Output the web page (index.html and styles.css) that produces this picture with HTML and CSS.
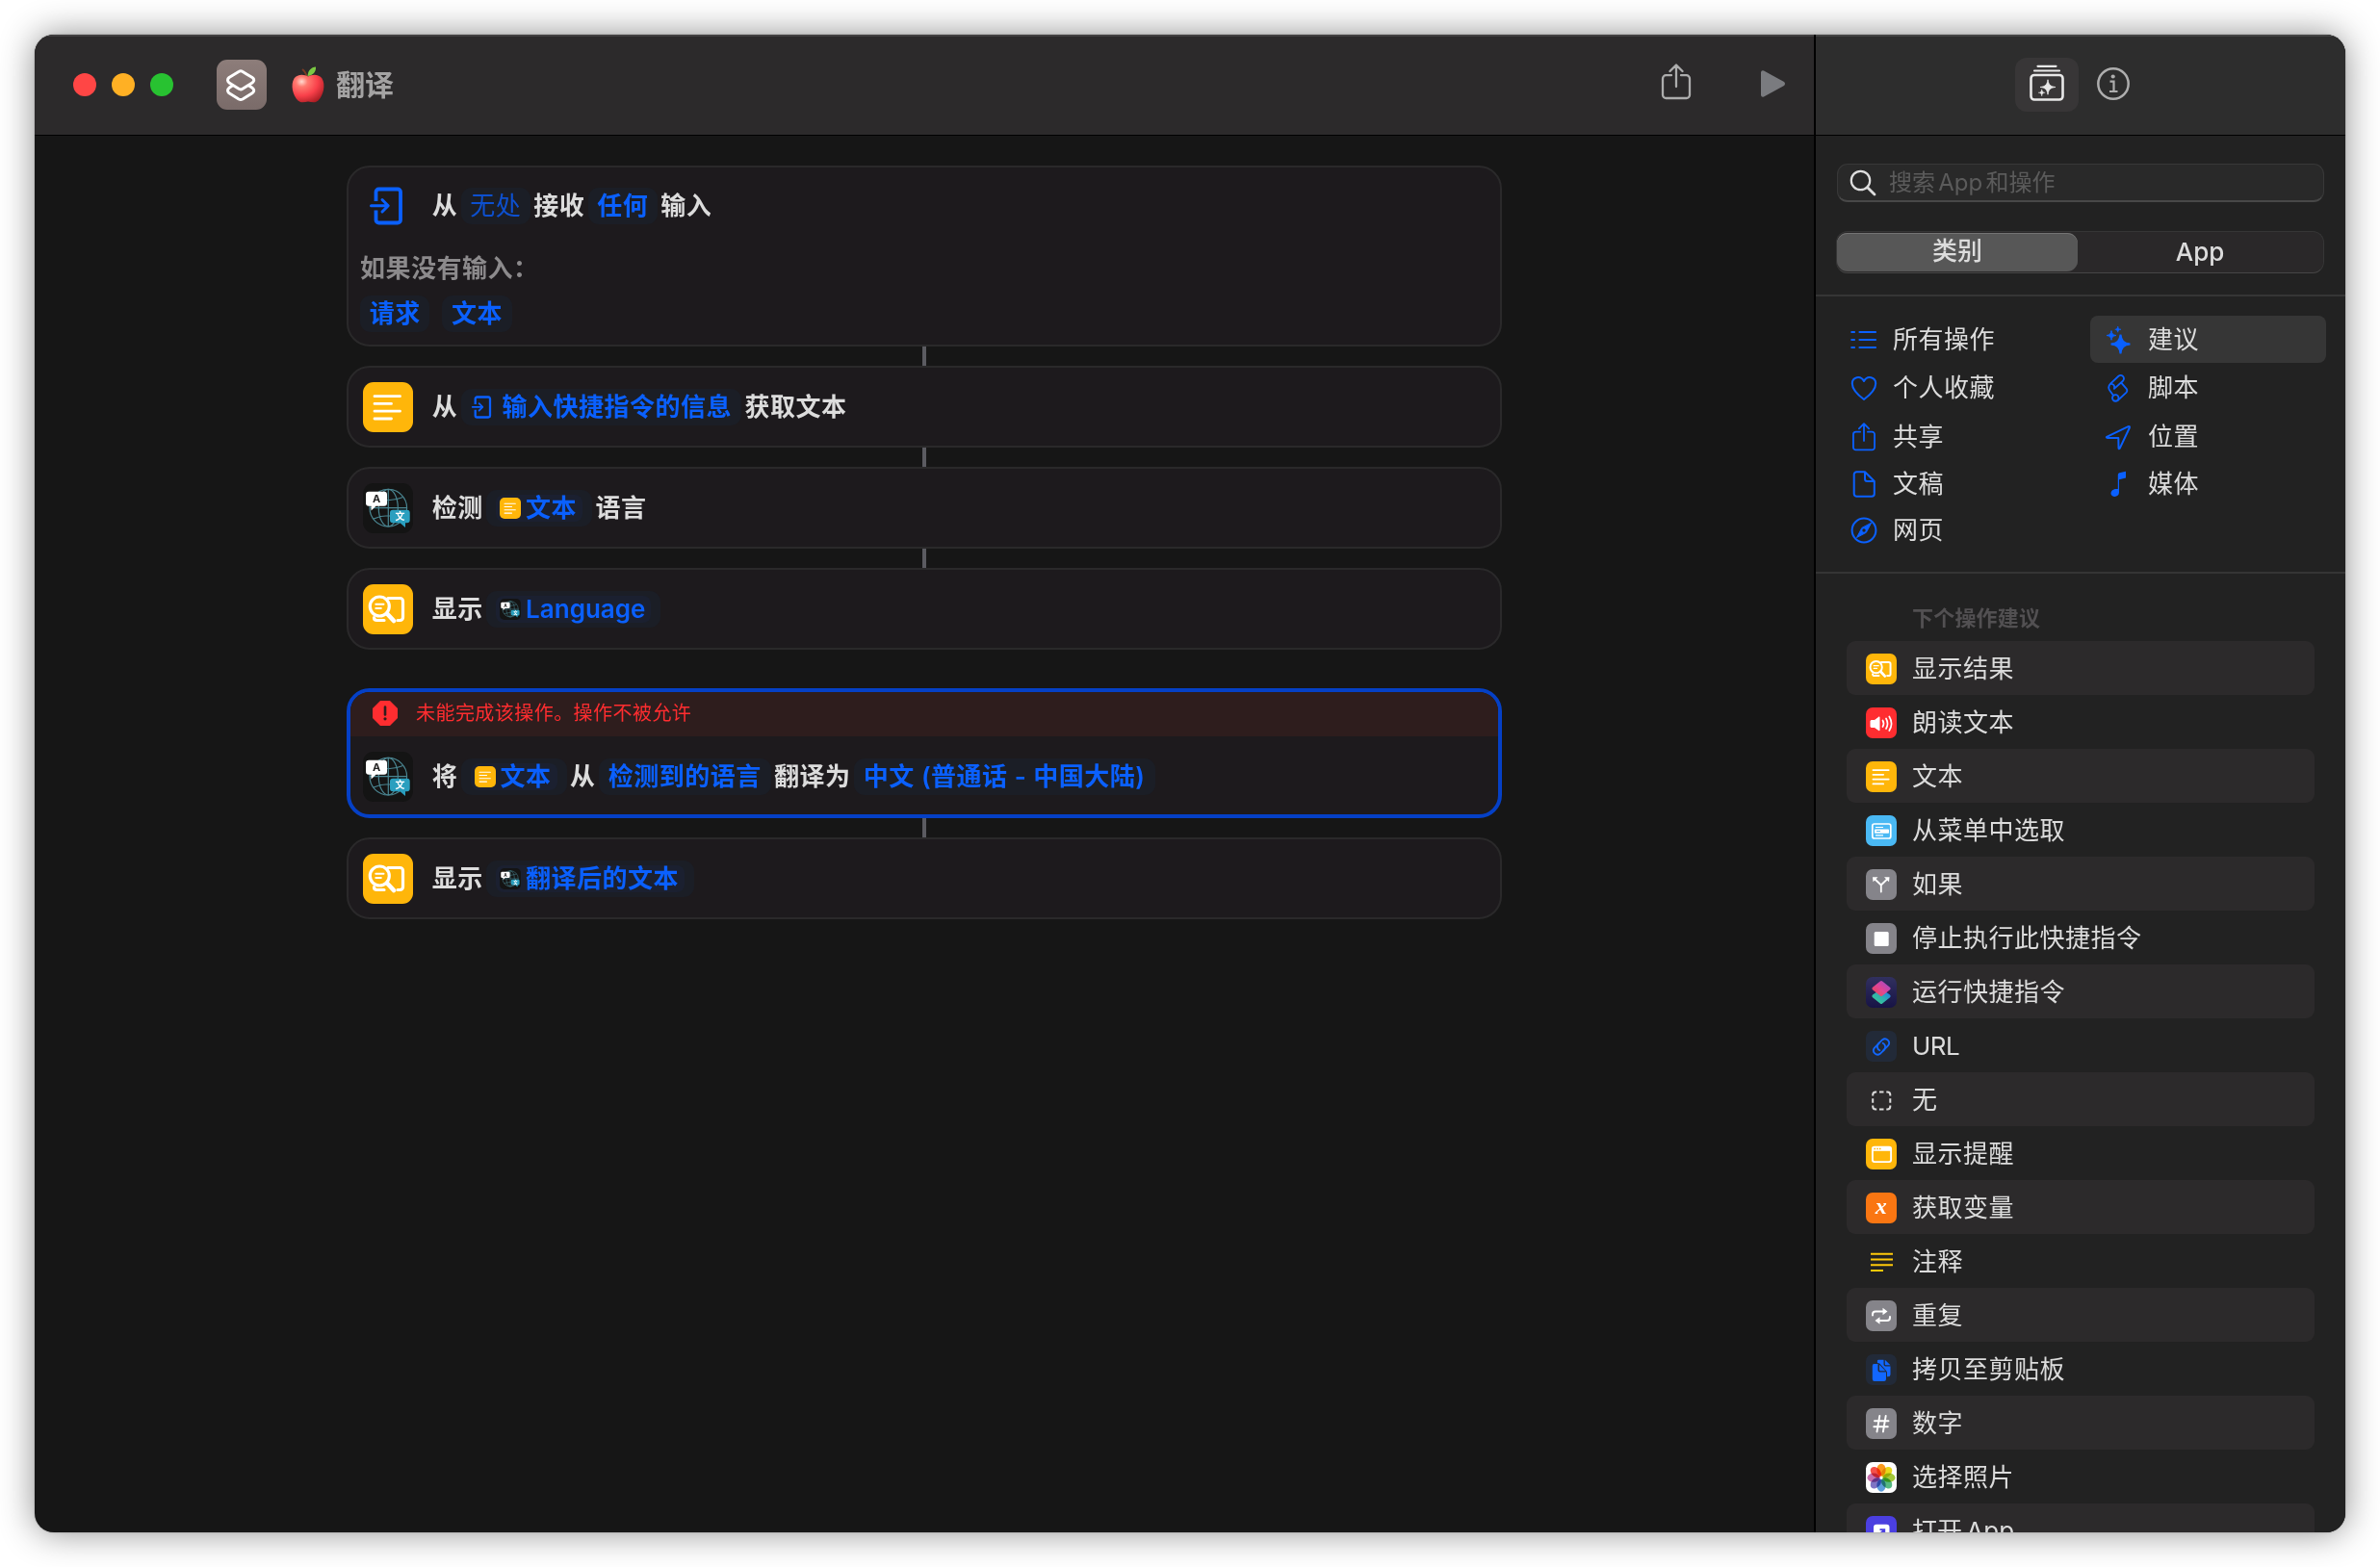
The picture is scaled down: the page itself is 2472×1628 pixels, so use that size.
FILE: index.html
```html
<!DOCTYPE html>
<html lang="zh-CN">
<head>
<meta charset="utf-8">
<title>翻译</title>
<link rel="stylesheet" href="styles.css">
</head>
<body>
<svg class="paints" width="0" height="0">
  <defs>
    <linearGradient id="g-top" x1="0" y1="1" x2="1" y2="0"><stop offset="0" stop-color="#f5493f"/><stop offset=".5" stop-color="#e8459a"/><stop offset="1" stop-color="#9a4fd8"/></linearGradient>
    <linearGradient id="g-bottom" x1="0" y1="1" x2="1" y2="0"><stop offset="0" stop-color="#3fd08a"/><stop offset=".5" stop-color="#2fb0b0"/><stop offset="1" stop-color="#1c6cf5"/></linearGradient>
    <radialGradient id="g-apple" cx=".3" cy=".25" r=".85"><stop offset="0" stop-color="#ffd9cf"/><stop offset=".22" stop-color="#ff7a70"/><stop offset=".6" stop-color="#f9404a"/><stop offset="1" stop-color="#a81c22"/></radialGradient>
  </defs>
</svg>
<svg class="symbols">
  <symbol id="i-text" viewBox="0 0 52 52"><path d="M12 14.7H38.5M12 22.4H29.5M12 30.2H38.5M12 38H29.5" fill="none" stroke="#fff" stroke-width="2.8" stroke-linecap="round"/></symbol>
  <symbol id="i-translate" viewBox="0 0 52 52">
    <g fill="none" stroke="#4a8591" stroke-width="1.2"><circle cx="26.3" cy="25.7" r="19.3"/><ellipse cx="26.3" cy="25.7" rx="10" ry="19.3"/><path d="M26.3 6.4V45M7 25.7H45.6M11 14.5Q26 21 41.6 14.5M11 37Q26 30.500 41.600 37"/></g>
    <path d="M6 8.700H22a3 3 0 0 1 3 3V20.700a3 3 0 0 1-3 3H13.500L8.500 28.500V23.700H6a3 3 0 0 1-3-3V11.700a3 3 0 0 1 3-3Z" fill="#fff"/>
    <path d="M31 27.700H45.700a3 3 0 0 1 3 3V38.300a3 3 0 0 1-3 3H44V46L38.500 41.300H31a3 3 0 0 1-3-3V30.700a3 3 0 0 1 3-3Z" fill="#2a9fbf"/>
    <text x="14" y="20.300" class="glyph-a">A</text><text x="38.400" y="38.200" class="glyph-wen">文</text>
  </symbol>
  <symbol id="i-result" viewBox="0 0 52 52"><g fill="none" stroke="#fff" stroke-linecap="round" stroke-linejoin="round"><path d="M26 14.500H38.500a3 3 0 0 1 3 3V34.500a3 3 0 0 1-3 3H36M11.500 34.500C11.500 36.500 12.500 37.500 14.500 37.500H22" stroke-width="3.200"/><circle cx="17.300" cy="23" r="10" stroke-width="3.200"/><path d="M25 30.500L32 38" stroke-width="4.600"/><path d="M13.300 20.700H21.500M13.300 24.900H18.800" stroke-width="2"/></g></symbol>
  <symbol id="i-enter" viewBox="0 0 36 40"><g fill="none" stroke="currentColor" stroke-linecap="round" stroke-linejoin="round" stroke-width="3.800"><path d="M7.500 15V5.500a3 3 0 0 1 3-3H30a3 3 0 0 1 3 3V34.500a3 3 0 0 1-3 3H10.500a3 3 0 0 1-3-3V24.500" stroke-linecap="butt"/><path d="M2.500 19.700H19M14 13.500L20.200 19.700L14 26" stroke-width="3"/></g></symbol>
  <symbol id="i-share" viewBox="0 0 32 38"><path d="M11 12.200H5.500a3.500 3.500 0 0 0-3.500 3.500V32.500a3.500 3.500 0 0 0 3.500 3.500H26.500a3.500 3.500 0 0 0 3.500-3.500V15.700a3.500 3.500 0 0 0-3.500-3.500H21M16 24V2.500M9.500 8L16 1.500L22.500 8" fill="none" stroke="currentColor" stroke-width="2.300" stroke-linecap="round" stroke-linejoin="round"/></symbol>
  <symbol id="i-star4" viewBox="0 0 20 20"><path d="M10 0C10.700 6.500 13 9.300 20 10C13 10.700 10.700 13.500 10 20C9.300 13.500 7 10.700 0 10C7 9.300 9.300 6.500 10 0Z" fill="currentColor"/></symbol>
</svg>

<div class="window">
  <main class="editor">
    <header class="titlebar">
      <div class="lights"><i class="light red"></i><i class="light amber"></i><i class="light green"></i></div>
      <div class="app-icon"><svg width="52" height="52" viewBox="0 0 52 52" fill="none" stroke="#fff" stroke-width="3" stroke-linejoin="round"><path d="M23.300 12.300Q25 11.200 26.700 12.300L37 18.500Q40.500 21 37 24L27 30.300Q25 31.500 23 30.300L13 24Q10 21 13 18.500Z"/><path d="M17 26.500L13 29.300Q10 32 13 34.800L23 41Q25 42 27 41L37 34.800Q40.500 32 37 29.300L33 26.500"/></svg></div>
      <svg class="apple" width="38" height="40" viewBox="0 0 38 40"><path d="M18 12Q16 6 13 4" stroke="#7a3b24" stroke-width="2" fill="none"/><path d="M18.500 11C19 5 22 2 27 1.500C27.500 6.500 24 10.500 18.500 11Z" fill="#7bc843"/><path d="M19 11.500C23 9 30 8.500 33.500 13.500C37.500 20 35 31 29.500 36.500C26 39.500 22.500 38 19 37.500C15.500 38 12 39.500 8.500 36.500C3 31 .5 20 4.500 13.500C8 8.500 15 9 19 11.500Z" fill="url(#g-apple)"/></svg>
      <h1>翻译</h1>
      <svg class="share" width="32" height="38"><use href="#i-share"/></svg>
      <svg class="play" width="28" height="30" viewBox="0 0 28 30"><path d="M1 3V27Q1.500 29.500 4 28.500L25 17Q27 15 25 13L4 1.500Q1.500 .5 1 3Z" fill="#7a7b7f"/></svg>
    </header>

    <div class="flow">
      <section class="card card-input">
        <div class="line">
          <span class="bare"><svg width="36" height="40"><use href="#i-enter"/></svg></span>
          <span>从</span><span class="chip dim">无处</span><span>接收</span><span class="chip">任何</span><span>输入</span>
        </div>
        <p class="hint">如果没有输入：</p>
        <div class="options"><span class="chip">请求</span><span class="chip">文本</span></div>
      </section>
      <div class="link"></div>
      <section class="card">
        <div class="line">
          <span class="tile yellow"><svg><use href="#i-text"/></svg></span>
          <span>从</span><span class="chip"><svg class="enter-small" width="22" height="24"><use href="#i-enter"/></svg>输入快捷指令的信息</span><span>获取文本</span>
        </div>
      </section>
      <div class="link"></div>
      <section class="card">
        <div class="line">
          <span class="tile black"><svg><use href="#i-translate"/></svg></span>
          <span>检测</span><span class="chip"><span class="token"><span class="mini yellow"><svg><use href="#i-text"/></svg></span>文本</span></span><span>语言</span>
        </div>
      </section>
      <div class="link"></div>
      <section class="card">
        <div class="line">
          <span class="tile yellow"><svg><use href="#i-result"/></svg></span>
          <span>显示</span><span class="chip"><span class="token"><span class="mini black"><svg><use href="#i-translate"/></svg></span><b class="latin">Language</b></span></span>
        </div>
      </section>
      <section class="card selected">
        <div class="error"><svg width="26" height="26" viewBox="0 0 26 26"><path d="M8 0H18L26 8V18L18 26H8L0 18V8Z" fill="#ff2d30"/><path d="M13 6.500V14.500" stroke="#2e1d1d" stroke-width="2.600" stroke-linecap="round"/><circle cx="13" cy="18.800" r="1.600" fill="#2e1d1d"/></svg>未能完成该操作。操作不被允许</div>
        <div class="line">
          <span class="tile black"><svg><use href="#i-translate"/></svg></span>
          <span>将</span><span class="chip"><span class="token"><span class="mini yellow"><svg><use href="#i-text"/></svg></span>文本</span></span><span>从</span><span class="chip">检测到的语言</span><span>翻译为</span><span class="chip">中文 (普通话 - 中国大陆)</span>
        </div>
      </section>
      <div class="link"></div>
      <section class="card">
        <div class="line">
          <span class="tile yellow"><svg><use href="#i-result"/></svg></span>
          <span>显示</span><span class="chip"><span class="token"><span class="mini black"><svg><use href="#i-translate"/></svg></span>翻译后的文本</span></span>
        </div>
      </section>
    </div>
  </main>

  <aside class="sidebar">
    <header class="sidebar-bar">
      <div class="tab-on"><svg width="36" height="38" viewBox="0 0 36 38" fill="none" stroke="#e8e8e8"><rect x="1.500" y="11" width="33" height="25.500" rx="3.500" stroke-width="2.600"/><path d="M5 6.500H31M8.500 1.800H27.500" stroke-width="2.200" stroke-linecap="round"/><use href="#i-star4" x="11" y="15.500" width="16" height="16" color="#e8e8e8"/><use href="#i-star4" x="9" y="25.500" width="7.500" height="7.500" color="#e8e8e8"/></svg></div>
      <svg class="info" width="34" height="34" viewBox="0 0 34 34" fill="none" stroke="#adadad"><circle cx="17" cy="17" r="15.700" stroke-width="2.500"/><circle cx="16.700" cy="9.500" r="2.100" fill="#adadad" stroke="none"/><path d="M13.500 14.700H17.500V25M13 25H21.500" stroke-width="2.200"/></svg>
    </header>
    <div class="search"><svg width="28" height="28" viewBox="0 0 28 28" fill="none" stroke="#dedede" stroke-linecap="round"><circle cx="11.500" cy="11.500" r="9.700" stroke-width="2.200"/><path d="M18.700 18.700L26 26" stroke-width="2.800"/></svg><span>搜索 App 和操作</span></div>
    <div class="segment"><span class="on">类别</span><span>App</span></div>
    <div class="categories">
      <div class="cat"><svg viewBox="0 0 28 28"><path d="M1.300 6H4M1.300 14H4M1.300 22H4M9.500 6H26M9.500 14H26M9.500 22H26" stroke-width="2.200"/></svg>所有操作</div>
      <div class="cat on"><svg viewBox="0 0 28 28"><use href="#i-star4" x="6.500" y="8.500" width="20" height="20"/><use href="#i-star4" x="2" y="4.500" width="10" height="10"/><use href="#i-star4" x="10.500" y="0" width="6.500" height="6.500"/></svg>建议</div>
      <div class="cat"><svg viewBox="0 0 28 28"><path d="M14 26C6 20 1.800 14.500 1.800 9.500C1.800 2.500 10.500 .5 14 7C17.500 .5 26.200 2.500 26.200 9.500C26.200 14.500 22 20 14 26Z"/></svg>个人收藏</div>
      <div class="cat"><svg viewBox="0 0 28 33"><path d="M9.500 17.500L19.500 8.500C22.500 4.500 18 .3 14.500 3L5.500 11.500C2.500 14.500 3 17.500 4.500 19.500L8.500 25M5.500 12C8.500 11.500 10.500 14 9.500 17.500M17.500 10.500L23.500 17.500Q25 19.500 23.500 21.500L13.500 31"/><circle cx="11" cy="28" r="3.600"/></svg>脚本</div>
      <div class="cat"><svg viewBox="0 0 32 38" class="thick"><use href="#i-share"/></svg>共享</div>
      <div class="cat"><svg viewBox="0 0 28 28"><path d="M2.200 13.800L24.500 3.200Q26.500 2.600 25.800 4.500L15.800 25.600Q14.800 27 14.500 25.500L14.300 14.900L3 15Q1.200 14.700 2.200 13.800Z"/></svg>位置</div>
      <div class="cat"><svg viewBox="0 0 28 28"><path d="M6.500 1.200H15L24.800 11V24a2.800 2.800 0 0 1-2.800 2.800H6.500a2.800 2.800 0 0 1-2.800-2.800V4a2.800 2.800 0 0 1 2.800-2.800ZM15 1.200V8.500Q15 11 17.500 11H24.800"/></svg>文稿</div>
      <div class="cat"><svg viewBox="0 0 28 28"><path d="M13.800 4.200Q13.800 2.700 15.300 2.200L22 .8V7.500L15 9.200V22.500C15 28.500 6 28 6.500 23C7 19.500 11 18.500 13.800 19Z" fill="currentColor" stroke="none"/></svg>媒体</div>
      <div class="cat"><svg viewBox="0 0 28 28"><circle cx="14" cy="14" r="12.400"/><path d="M21.500 6.500L16.300 16.300L6.500 21.500L11.700 11.700Z" fill="currentColor" stroke-width="1"/><circle cx="14" cy="14" r="1.700" fill="#222" stroke="none"/></svg>网页</div>
    </div>
    <div class="suggestions">
      <h2>下个操作建议</h2>
      <div class="row"><span class="ico yellow"><svg><use href="#i-result"/></svg></span>显示结果</div>
      <div class="row"><span class="ico red"><svg viewBox="0 0 32 32"><path d="M5.500 13.500H9L14 9.800V24L9 20.500H5.500Q5 20.500 5 20V14Q5 13.500 5.500 13.500Z" fill="#fff" stroke="#fff" stroke-linejoin="round"/><path d="M17.500 13.500Q19.500 16.800 17.500 20M21 11.500Q24 16.800 21 22M24.300 9.500Q28.800 16.800 24.300 24" fill="none" stroke="#fff" stroke-width="1.700" stroke-linecap="round"/></svg></span>朗读文本</div>
      <div class="row"><span class="ico yellow"><svg><use href="#i-text"/></svg></span>文本</div>
      <div class="row"><span class="ico sky"><svg viewBox="0 0 32 32"><rect x="6.800" y="9" width="19" height="15" rx="2" fill="none" stroke="#fff" stroke-width="1.700"/><path d="M10 12.500H18M10 20.800H18" stroke="#fff" stroke-width="1.200"/><rect x="9" y="14.400" width="15" height="4.400" rx=".8" fill="#fff"/><path d="M11 16.600H15" stroke="#4ab9f4" stroke-width="1"/></svg></span>从菜单中选取</div>
      <div class="row"><span class="ico gray"><svg viewBox="0 0 32 32"><path d="M15.800 23.500V16.500L9.500 10.500M15.800 16.500L22 10.500" fill="none" stroke="#fff" stroke-width="1.800" stroke-linecap="round"/><path d="M7 8.200H12.500L7.500 13.200ZM24.500 8.200H19L24 13.200Z" fill="#fff"/></svg></span>如果</div>
      <div class="row"><span class="ico gray"><svg viewBox="0 0 32 32"><rect x="8.700" y="9" width="15" height="15" rx="1.500" fill="#fff"/></svg></span>停止执行此快捷指令</div>
      <div class="row"><span class="ico indigo"><svg viewBox="0 0 32 32"><path d="M14.800 13.300Q16 12.600 17.200 13.300L25 18.500Q26.500 20 25 21.300L17.200 27.500Q16 28.500 14.800 27.500L7 21.300Q5.500 20 7 18.500Z" fill="url(#g-bottom)"/><path d="M14.800 4.500Q16 3.600 17.200 4.500L25 10.700Q26.500 12 25 13.300L17.200 19.500Q16 20.500 14.800 19.500L7 13.300Q5.500 12 7 10.700Z" fill="url(#g-top)" opacity=".95"/></svg></span>运行快捷指令</div>
      <div class="row"><span class="ico navy"><svg viewBox="0 0 32 32"><g fill="none" stroke="#1267ff" stroke-width="1.800" stroke-linecap="round" transform="rotate(-45 16 16.500)"><path d="M17.500 12.300H10A4.300 4.300 0 0 0 10 20.800H16A4.300 4.300 0 0 0 19.800 15"/><path d="M14.500 20.700H22A4.300 4.300 0 0 0 22 12.200H16A4.300 4.300 0 0 0 12.200 18"/></g></svg></span><span class="url">URL</span></div>
      <div class="row"><span class="ico"><svg viewBox="0 0 32 32"><path d="M7.200 11.500V10.500Q7.200 7.500 10.200 7.500H11.200M14 7.500H18.500M21.300 7.500H22.300Q25.300 7.500 25.300 10.500V11.500M25.300 14.300V18.700M25.300 21.500V22.500Q25.300 25.500 22.300 25.500H21.300M18.500 25.500H14M11.200 25.500H10.200Q7.200 25.500 7.200 22.500V21.500M7.200 18.700V14.300" fill="none" stroke="#dcdcdc" stroke-width="2"/></svg></span>无</div>
      <div class="row"><span class="ico yellow"><svg viewBox="0 0 32 32"><rect x="6.900" y="8.800" width="19.200" height="15.300" rx="2" fill="none" stroke="#fff" stroke-width="1.900"/><path d="M6.500 10.800H26.500" stroke="#fff" stroke-width="4"/><path d="M8.500 10.500H10M11.300 10.500H12.800M14 10.500H15.500" stroke="#ffb60a" stroke-width="1.400"/></svg></span>显示提醒</div>
      <div class="row"><span class="ico orange"><i class="var">x</i></span>获取变量</div>
      <div class="row"><span class="ico"><svg viewBox="0 0 32 32"><path d="M5 7.800H28M5 13.500H28M5 19.200H28M5 25H18" stroke="#ffc90a" stroke-width="1.900"/></svg></span>注释</div>
      <div class="row"><span class="ico gray"><svg viewBox="0 0 32 32"><path d="M7 15.500V14.500Q7 11.500 10 11.500H17.500M25 17V18Q25 21 22 21H14.500" fill="none" stroke="#fff" stroke-width="2" stroke-linecap="round"/><path d="M17.500 7.800L22.500 11.500L17.500 15.200ZM14.500 17.300L9.500 21L14.500 24.800Z" fill="#fff"/></svg></span>重复</div>
      <div class="row"><span class="ico navy"><svg viewBox="0 0 32 32"><path d="M13 5.800H18.500V10.500Q18.500 12.500 20.500 12.500H25.500V21Q25.500 23.300 23 23.300H22V19.200Q22 18 21 17L14.500 9.800Q13.800 9 12 9Q11.500 5.800 13 5.800ZM19.800 5.800L25.500 11.300H20.800Q19.800 11.300 19.800 10.300Z" fill="#1267ff"/><path d="M8.500 10H12.500V16.500Q12.500 18.500 14.500 18.500H21V25.800Q21 28 18.800 28H9Q6.800 28 6.800 25.800V12Q6.800 10 8.500 10ZM14 10.800L20.300 17.200H15Q14 17.200 14 16.200Z" fill="#1267ff"/></svg></span>拷贝至剪贴板</div>
      <div class="row"><span class="ico gray"><svg viewBox="0 0 32 32"><path d="M14.300 8L11.500 24.500M20.700 8L17.900 24.500M9 13.300H23.500M8.300 19.300H22.800" stroke="#fff" stroke-width="1.900" stroke-linecap="round"/></svg></span>数字</div>
      <div class="row"><span class="ico white"><svg viewBox="0 0 32 32" class="petals"><g transform="translate(16 16.200)"><ellipse cy="-8" rx="4.600" ry="6.500" fill="#fb9a1e"/><ellipse cy="-8" rx="4.600" ry="6.500" fill="#e8d91c" transform="rotate(45)"/><ellipse cy="-8" rx="4.600" ry="6.500" fill="#a3c93a" transform="rotate(90)"/><ellipse cy="-8" rx="4.600" ry="6.500" fill="#55b982" transform="rotate(135)"/><ellipse cy="-8" rx="4.600" ry="6.500" fill="#5c9ddb" transform="rotate(180)"/><ellipse cy="-8" rx="4.600" ry="6.500" fill="#7f74c4" transform="rotate(225)"/><ellipse cy="-8" rx="4.600" ry="6.500" fill="#c76fae" transform="rotate(270)"/><ellipse cy="-8" rx="4.600" ry="6.500" fill="#f5504a" transform="rotate(315)"/></g></svg></span>选择照片</div>
      <div class="row"><span class="ico violet"><svg viewBox="0 0 32 32"><rect x="8" y="8.700" width="16.500" height="16.500" rx="3" fill="#fff"/><path d="M13 20L19 14.500M14.500 14.200H19.300V19" fill="none" stroke="#4b3fe0" stroke-width="1.800"/></svg></span><span class="open">打开 App</span></div>
    </div>
  </aside>
</div>
</body>
</html>
```
FILE: styles.css
```css
* { box-sizing: border-box; }

body {
  margin: 0;
  width: 2472px;
  height: 1628px;
  overflow: hidden;
  padding: 36px;
  background: #fff;
  font-family: Inter, "Noto Sans CJK SC", sans-serif;
  font-size: 26px;
  line-height: 38px;
  letter-spacing: .5px;
  color: #dcdcdc;
}

h1, h2, p { margin: 0; }
svg { display: block; flex: none; }
.paints { position: absolute; }
.symbols { display: none; }
.glyph-a { font: 700 11px Inter, sans-serif; letter-spacing: 0; text-anchor: middle; fill: #222; }
.glyph-wen { font: 700 10px "Noto Sans CJK SC", sans-serif; letter-spacing: 0; text-anchor: middle; fill: #fff; }

.window {
  display: flex;
  width: 2400px;
  height: 1556px;
  border-radius: 20px;
  overflow: hidden;
  background: #161616;
  box-shadow: 0 0 36px rgba(0, 0, 0, .45), 0 0 2px rgba(0, 0, 0, .3);
}

/* editor */
.editor { width: 1848px; flex: none; }
.titlebar {
  display: flex;
  align-items: center;
  height: 105px;
  padding: 0 28px 1px 40px;
  background: #2c2a2b;
  border-bottom: 1px solid #000;
  box-shadow: inset 0 2px #424041;
}
.lights { display: flex; gap: 16px; margin-right: 45px; }
.light { width: 24px; height: 24px; border-radius: 50%; }
.light.red { background: #ff4645; }
.light.amber { background: #ffb024; }
.light.green { background: #28c231; }
.app-icon { width: 52px; height: 52px; border-radius: 11px; background: linear-gradient(#8d7d7a, #7a6b69); }
.apple { margin-left: 24px; }
.titlebar h1 { margin-left: 10px; font-size: 30px; font-weight: 700; letter-spacing: 0; color: #a4a3a3; }
.share { margin: -5px 71px 0 auto; color: #adadad; }
.play { margin-top: -1px; }

.flow { width: 1200px; margin: 31px auto 0; }
.card {
  height: 85px;
  border: 2px solid #2a292a;
  border-radius: 24px;
  background: #1d1a1d;
  font-weight: 600;
}
.card-input { height: 188px; }
.card-input .line { height: 80px; }
.link { width: 4px; height: 20px; margin: 0 auto; background: #5b5b61; }
.line { display: flex; align-items: center; height: 100%; gap: 3.3px; padding-left: 15px; white-space: nowrap; }
.tile, .bare { width: 52px; height: 52px; margin-right: 16.5px; flex: none; }
.bare { padding: 6px; color: #0a60ff; }
.tile { border-radius: 11px; }
.tile svg { width: 52px; height: 52px; }
.yellow { background: #ffb60a; }
.black { background: #141414; }
.chip {
  display: flex;
  align-items: center;
  height: 38px;
  padding: 0 10px;
  border-radius: 11px;
  background: #1b1e26;
  color: #0a60ff;
}
.card-input .chip { padding: 0 9.700px; }
.chip.dim { font-weight: 400; color: #0d50cf; }
.token { display: flex; align-items: center; height: 28px; padding: 0 6px 0 4px; border-radius: 8px; background: #1b2030; }
.mini { width: 22px; height: 22px; margin-right: 5px; border-radius: 5px; }
.mini svg { width: 22px; height: 22px; }
.enter-small { margin-right: 11px; }
.latin { font-weight: 600; letter-spacing: 0; }
.hint { height: 38px; margin-top: 6px; padding-left: 12px; color: #8c8a8c; }
.options { display: flex; gap: 13px; margin-top: 9px; padding-left: 12px; }

.card.selected { height: 135px; margin-top: 40px; border: 4px solid #0540c6; overflow: hidden; }
.selected .line { height: 81px; padding: 3px 0 0 13px; }
.error {
  display: flex;
  align-items: center;
  gap: 19px;
  height: 46px;
  padding: 0 0 3px 23px;
  background: #2e1d1d;
  font-size: 20px;
  font-weight: 400;
  letter-spacing: .45px;
  color: #ff2d30;
}

/* sidebar */
.sidebar { flex: 1; display: flex; flex-direction: column; border-left: 2px solid #000; background: #222; }
.sidebar-bar {
  display: flex;
  align-items: center;
  flex: none;
  gap: 19px;
  height: 105px;
  padding: 0 0 1px 207px;
  background: #2d2d2d;
  border-bottom: 1px solid #000;
  box-shadow: inset 0 2px #444;
}
.tab-on { display: flex; align-items: center; justify-content: center; width: 66px; height: 56px; border-radius: 12px; background: #383637; }
.tab-on svg { margin-top: -3px; }
.info { margin-top: -2px; }
.search {
  display: flex;
  align-items: center;
  gap: 13px;
  flex: none;
  width: 506px;
  height: 40px;
  margin: 29px 0 0 22px;
  padding-left: 12px;
  border: 1px solid #383838;
  border-bottom: 2px solid #484848;
  border-radius: 11px;
  background: #292929;
  font-size: 24px;
  letter-spacing: 0;
  word-spacing: -3.500px;
  color: #5b5b5b;
}
.segment {
  display: flex;
  flex: none;
  width: 507px;
  height: 44px;
  margin: 30px 0 0 21px;
  padding: 1px 1px 1px 0;
  border: 1px solid #363636;
  border-bottom-color: #464646;
  border-radius: 12px;
  background: #2a2829;
  font-weight: 500;
  letter-spacing: 0;
}
.segment span { flex: 1; line-height: 39px; text-align: center; }
.segment .on { flex: none; width: 250px; line-height: 38px; border-radius: 11px; background: #575757; box-shadow: inset 0 1px #747474; }
.categories {
  display: grid;
  flex: none;
  grid-template-columns: 248px 245px;
  grid-template-rows: 49px 51px 50px 48px 48px;
  height: 290px;
  margin-top: 22px;
  padding: 20px 0 0 37px;
  border: solid #353535;
  border-width: 2px 0;
}
.cat { display: flex; align-items: center; padding-top: 1.500px; }
.cat:nth-child(odd) { margin-left: -1px; }
.cat svg { width: 28px; height: 30px; margin-right: 16px; color: #0a60ff; fill: none; stroke: #0a60ff; stroke-width: 2; stroke-linejoin: round; stroke-linecap: round; }
.cat:nth-child(even) svg { margin: 0 17px 0 15px; }
.cat.on { border-radius: 8px; background: #363636; }

.suggestions { flex: 1; overflow: hidden; padding: 26px 0 0 32px; }
.suggestions h2 { height: 44px; padding-left: 68px; font-size: 22px; font-weight: 700; letter-spacing: .2px; line-height: 40px; color: #525052; }
.row { display: flex; align-items: center; width: 486px; height: 56px; padding-left: 20px; border-radius: 9px; line-height: 40px; }
.row:nth-child(even) { background: #2c2a2b; }
.ico { display: flex; align-items: center; justify-content: center; width: 32px; height: 32px; margin-right: 16px; border-radius: 7px; }
.ico svg { width: 32px; height: 32px; }
.row { padding-top: 1px; }
.red { background: #ff2d30; }
.sky { background: #4ab9f4; }
.gray { background: #85848a; }
.indigo { background: linear-gradient(#31305f, #171345); }
.navy { background: #222a38; }
.orange { background: #fa7612; }
.white { background: #fff; }
.violet { background: #4b3fe0; }
.petals ellipse { mix-blend-mode: multiply; }
.var { font: italic 700 24px/24px "Liberation Serif", serif; margin-top: -4px; color: #fff; }
.url { letter-spacing: -.6px; }
.open { letter-spacing: 0; word-spacing: -3px; }
```
